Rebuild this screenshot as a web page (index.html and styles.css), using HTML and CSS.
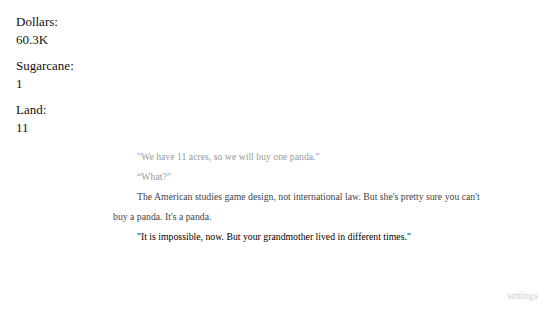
FILE: index.html
```html
<!DOCTYPE html>
<html>
<head>
<meta charset="utf-8">
<link rel="stylesheet" href="styles.css">
</head>
<body>
<div class="app">
  <div class="main">
    <div class="stats">
      <div class="stat"><div class="line">Dollars:</div><div class="line">60.3K</div></div>
      <div class="stat"><div class="line">Sugarcane:</div><div class="line">1</div></div>
      <div class="stat"><div class="line">Land:</div><div class="line">11</div></div>
    </div>
    <div class="story">
      <p class="old">"We have 11 acres, so we will buy one panda."</p>
      <p class="old">“What?”</p>
      <p class="mid">The American studies game design, not international law. But she's pretty sure you can't buy a panda. It's a panda.</p>
      <p class="new">"It is impossible, now. But your grandmother lived in different times."</p>
    </div>
  </div>
  <div class="footer"><span class="settings">settings</span></div>
</div>
</body>
</html>
```
FILE: styles.css
```css
html, body {
  margin: 0;
  padding: 0;
  background: #fff;
}
.app {
  display: flex;
  flex-direction: column;
  height: 312px;
  font-family: "Liberation Serif", serif;
}
.main {
  display: flex;
  flex: 1;
}
.stats {
  width: 97px;
  padding: 13px 0 0 16px;
  color: #111;
}
.line {
  font-family: "Liberation Serif", serif;
  font-size: 13px;
  line-height: 18px;
}
.stat {
  margin-bottom: 8px;
}
.story {
  width: 372px;
  padding-top: 147px;
  font-size: 9.75px;
  line-height: 20px;
}
.story p {
  margin: 0;
  text-indent: 24px;
}
.old { color: #9a9a9a; }
.mid { color: #444; }
.new { color: #000; }
.footer {
  display: flex;
  justify-content: flex-end;
  padding: 0 17px 10px 0;
}
.settings {
  font-size: 10px;
  line-height: 12px;
  color: #d0d0d0;
}
```
